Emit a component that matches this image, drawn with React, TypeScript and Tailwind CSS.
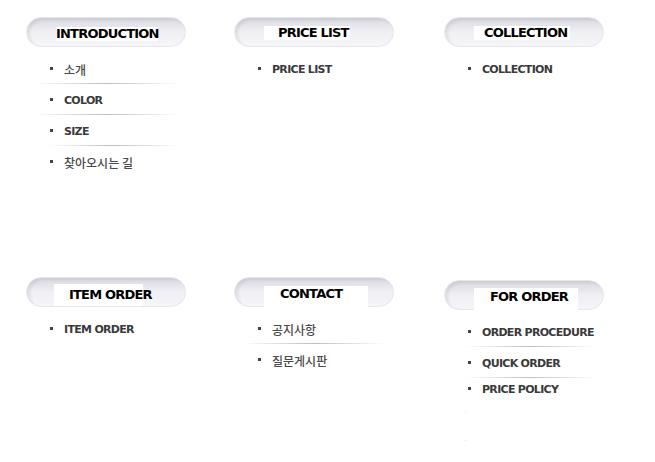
import React from 'react';

type Item = { label: string; ko?: boolean; line?: string; gap?: string };

type Menu = {
  title: string;
  box: string;
  text: string;
  top: string;
  items: Item[];
};

// line classes: where each separator starts under the item
const lineA = 'ml-[9px] w-[143px]';
const lineB = 'ml-[22px] w-[130px]';
const lineC = 'ml-[21px] w-[130px]';

const rowOne: Menu[] = [
  {
    title: 'INTRODUCTION',
    box: 'ml-[29px] mt-[9px] w-[102px] h-[14px]',
    text: 'pl-0',
    top: 'mt-[16px]',
    items: [
      { label: '소개', ko: true, line: lineA },
      { label: 'COLOR', line: lineA },
      { label: 'SIZE', line: lineB },
      { label: '찾아오시는 길', ko: true },
    ],
  },
  {
    title: 'PRICE LIST',
    box: 'ml-[29px] mt-[8px] w-[86px] h-[14px]',
    text: 'pl-[14px]',
    top: 'mt-[16px]',
    items: [{ label: 'PRICE LIST' }],
  },
  {
    title: 'COLLECTION',
    box: 'ml-[29px] mt-[8px] w-[96px] h-[14px]',
    text: 'pl-[10px]',
    top: 'mt-[16px]',
    items: [{ label: 'COLLECTION' }],
  },
];

const rowTwo: Menu[] = [
  {
    title: 'ITEM ORDER',
    box: 'ml-[27px] mt-[6px] w-[89px] h-[22px]',
    text: 'pl-[15px]',
    top: 'mt-[16px]',
    items: [{ label: 'ITEM ORDER' }],
  },
  {
    title: 'CONTACT',
    box: 'ml-[29px] mt-[8px] w-[104px] h-[22px] items-start pt-[1px]',
    text: 'pl-[16px]',
    top: 'mt-[16px]',
    items: [
      { label: '공지사항', ko: true, line: lineA },
      { label: '질문게시판', ko: true },
    ],
  },
  {
    title: 'FOR ORDER',
    box: 'ml-[29px] mt-[7px] w-[104px] h-[22px] items-start pt-[2px]',
    text: 'pl-[16px]',
    top: 'mt-[16px]',
    items: [
      { label: 'ORDER PROCEDURE', line: lineC },
      { label: 'QUICK ORDER', line: lineC },
      { label: 'PRICE POLICY', gap: 'mt-[5px]' },
    ],
  },
];

const Pill: React.FC<{ menu: Menu }> = ({ menu }) => (
  <div className="flex h-[30px] w-[160px] items-start rounded-full border border-[#e6e6ec] bg-gradient-to-b from-[#d9d9e1] via-[#efeff4] to-[#f6f6f9] shadow-[inset_3px_2px_3px_rgba(0,0,0,0.07)]">
    <div className={`flex items-center bg-white ${menu.box}`}>
      <span
        className={`whitespace-nowrap text-[13px] font-bold leading-[14px] tracking-[-0.8px] text-black ${menu.text}`}
        style={{ fontFamily: '"DejaVu Sans", sans-serif' }}
      >
        {menu.title}
      </span>
    </div>
  </div>
);

const MenuBlock: React.FC<{ menu: Menu; width: string }> = ({ menu, width }) => (
  <div className={`flex flex-col ${width}`}>
    <Pill menu={menu} />
    <ul className={`flex flex-col ${menu.top}`}>
      {menu.items.map((item, i) => (
        <li key={i} className={i > 0 ? item.gap ?? 'mt-[10px]' : ''}>
          <div className="flex h-[14px] items-center">
            <span className="ml-[24px] mb-[3px] h-[3px] w-[3px] bg-[#444]" />
            {item.ko ? (
              <span
                className="ml-[11px] whitespace-nowrap text-[12px] font-medium leading-[14px] text-[#4a4a4a]"
                style={{ fontFamily: '"Noto Sans CJK KR", sans-serif' }}
              >
                {item.label}
              </span>
            ) : (
              <span
                className="ml-[11px] whitespace-nowrap text-[11px] font-bold leading-[14px] tracking-[-0.7px] text-[#3a3a3a]"
                style={{ fontFamily: '"DejaVu Sans", sans-serif' }}
              >
                {item.label}
              </span>
            )}
          </div>
          {item.line && (
            <div
              className={`mt-[6px] h-px bg-gradient-to-r from-transparent via-[#bdbdbd] to-transparent ${item.line}`}
            />
          )}
        </li>
      ))}
    </ul>
  </div>
);

const App: React.FC = () => {
  const widths = ['w-[208px]', 'w-[210px]', 'w-[160px]'];
  return (
    <div className="h-[462px] w-[655px] bg-white pl-[26px]">
      <div className="flex h-[260px] pt-[17px]">
        {rowOne.map((m, i) => (
          <MenuBlock key={m.title} menu={m} width={widths[i]} />
        ))}
      </div>
      <div className="flex pt-[17px]">
        {rowTwo.map((m, i) => (
          <div key={m.title} className={i === 2 ? 'pt-[3px]' : ''}>
            <MenuBlock menu={m} width={widths[i]} />
            {i === 2 && (
              <div className="ml-[21px] flex flex-col">
                <span className="mt-[14px] h-px w-px bg-[#e4e4e4]" />
                <span className="mt-[28px] h-px w-px bg-[#e4e4e4]" />
              </div>
            )}
          </div>
        ))}
      </div>
    </div>
  );
};

export default App;
